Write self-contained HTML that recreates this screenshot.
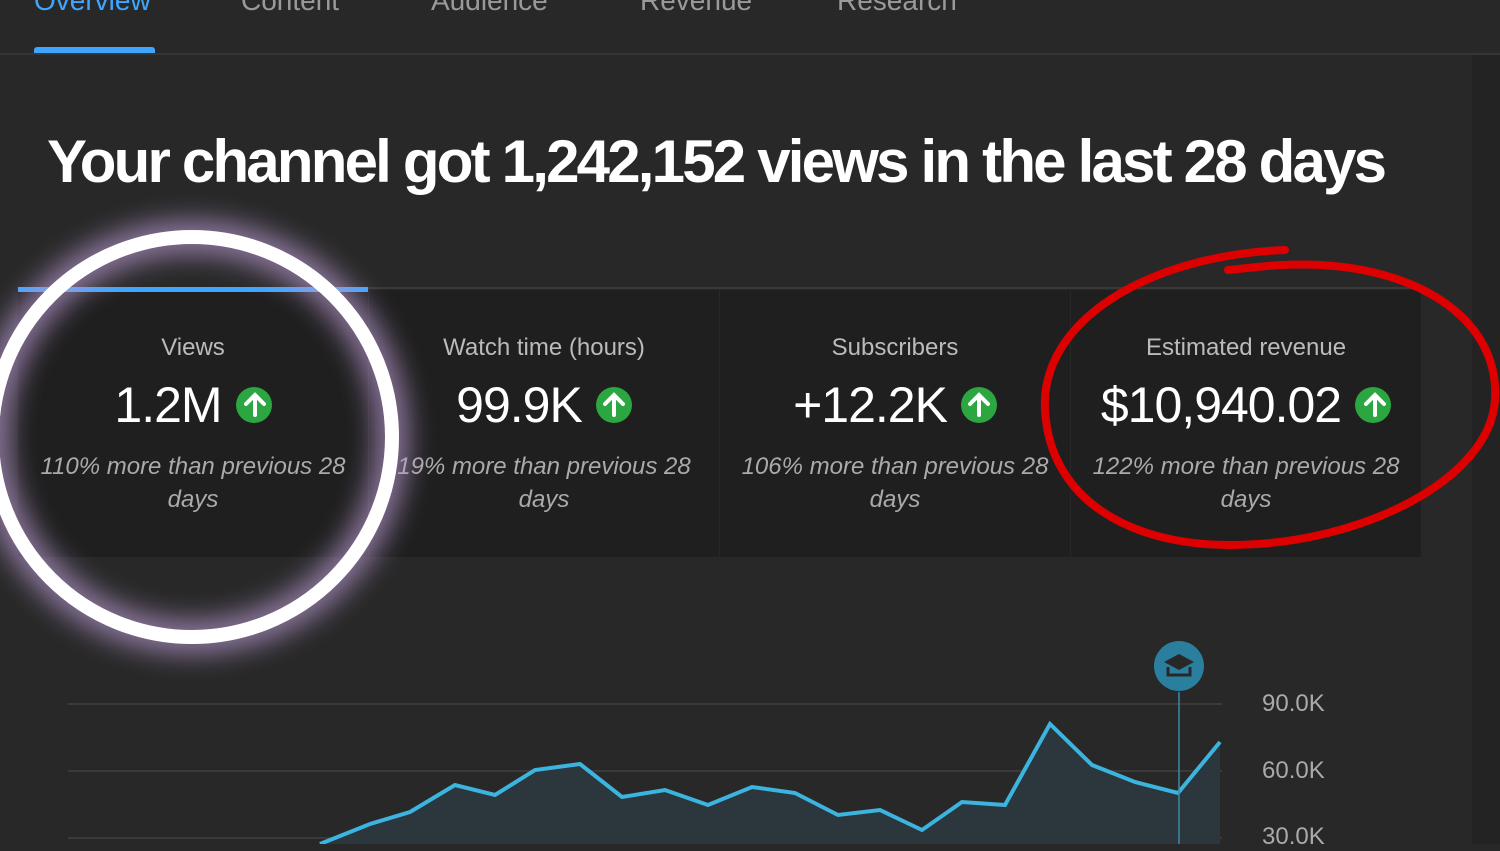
<!DOCTYPE html><html><head><style>
body{margin:0;width:1500px;height:844px;background:#282828;overflow:hidden;position:relative;font-family:"Liberation Sans",sans-serif}
.a{position:absolute}
.tab{position:absolute;top:-15px;font-size:28px;color:#9a9a9a}
.card{position:absolute;top:290px;width:350px;height:267px;background:#1f1f1f;text-align:center;color:#aaa}
.card .t{margin-top:44px;font-size:24px;color:#bbb}
.card .v{margin-top:14px;font-size:50px;color:#fff;letter-spacing:-1px}
.card .v span{display:inline-block;width:36px;height:36px;border-radius:50%;background:#2ba640;vertical-align:middle;margin-left:14px;position:relative;top:-4px}
.card .d{margin-top:16px;font-size:24px;font-style:italic;line-height:33px;white-space:nowrap}
</style></head><body>
<div class="a" style="left:1472px;top:55px;width:28px;height:789px;background:#232323"></div>
<div class="tab" style="left:34px;color:#3ea6ff">Overview</div>
<div class="tab" style="left:241px">Content</div>
<div class="tab" style="left:431px">Audience</div>
<div class="tab" style="left:640px">Revenue</div>
<div class="tab" style="left:837px">Research</div>
<div class="a" style="left:34px;top:47px;width:121px;height:6px;background:#3ea6ff;border-radius:3px 3px 0 0"></div>
<div class="a" style="left:0;top:53px;width:1500px;height:2px;background:#353535"></div>
<div class="a" style="left:47px;top:127px;font-size:60px;font-weight:bold;color:#fff;letter-spacing:-2.8px">Your channel got 1,242,152 views in the last 28 days</div>
<div class="a" style="left:18px;top:287px;width:1402px;height:2px;background:#383838"></div>
<div class="card" style="left:18px"><div class="t">Views</div><div class="v">1.2M<span></span></div><div class="d">110% more than previous 28<br>days</div></div>
<div class="card" style="left:369px"><div class="t">Watch time (hours)</div><div class="v">99.9K<span></span></div><div class="d">19% more than previous 28<br>days</div></div>
<div class="card" style="left:720px"><div class="t">Subscribers</div><div class="v">+12.2K<span></span></div><div class="d">106% more than previous 28<br>days</div></div>
<div class="card" style="left:1071px"><div class="t">Estimated revenue</div><div class="v">$10,940.02<span></span></div><div class="d">122% more than previous 28<br>days</div></div>
<div class="a" style="left:18px;top:287px;width:350px;height:5px;background:#3ea6ff"></div>
<div class="a" style="left:1262px;top:690px;font-size:24px;color:#aaa">90.0K</div>
<div class="a" style="left:1262px;top:757px;font-size:24px;color:#aaa">60.0K</div>
<div class="a" style="left:1262px;top:823px;font-size:24px;color:#aaa">30.0K</div>
<svg class="a" style="left:0;top:0" width="1500" height="844">
<g stroke="#fff" stroke-width="4" fill="none" stroke-linecap="round">
<path d="M255 415V396M246 404l9-9 9 9"/><path d="M614 415V396M605 404l9-9 9 9"/><path d="M979 415V396M970 404l9-9 9 9"/><path d="M1375 415V396M1366 404l9-9 9 9"/></g>
<line x1="68" y1="704" x2="1222" y2="704" stroke="#3a3a3a" stroke-width="2"/>
<line x1="68" y1="771" x2="1222" y2="771" stroke="#3a3a3a" stroke-width="2"/>
<line x1="68" y1="838" x2="1222" y2="838" stroke="#3a3a3a" stroke-width="2"/>
<path d="M320 844L370 824L410 812L455 785L495 795L535 770L580 764L622 797L665 790L708 805L752 787L795 793L838 815L880 810L922 830L962 802L1005 805L1050 724L1092 765L1135 782L1178 793L1220 742V844Z" fill="#2b363d"/>
<path d="M320 844L370 824L410 812L455 785L495 795L535 770L580 764L622 797L665 790L708 805L752 787L795 793L838 815L880 810L922 830L962 802L1005 805L1050 724L1092 765L1135 782L1178 793L1220 742" fill="none" stroke="#3cb4e0" stroke-width="4"/>
<line x1="1179" y1="692" x2="1179" y2="844" stroke="#3a8aa6" stroke-width="1.5"/>
<circle cx="1179" cy="666" r="25" fill="#2a7f9e"/>
<path d="M1164 662l15-8 15 8-15 8z" fill="#282828"/><path d="M1168 667v8h22v-8" stroke="#282828" stroke-width="3" fill="none"/>
<defs><filter id="g" x="-30%" y="-30%" width="160%" height="160%"><feGaussianBlur stdDeviation="14"/></filter></defs>
<circle cx="192" cy="437" r="200" fill="none" stroke="#b89ad0" stroke-width="30" filter="url(#g)" opacity=".8"/>
<circle cx="192" cy="437" r="200" fill="none" stroke="#fff" stroke-width="14"/>
<path d="M1285 250C1150 255 1040 320 1045 410C1050 500 1130 545 1230 545C1360 545 1490 480 1495 400C1500 320 1420 270 1320 265C1280 263 1250 268 1228 270" fill="none" stroke="#d00" stroke-width="8" stroke-linecap="round"/>
</svg>
</body></html>
